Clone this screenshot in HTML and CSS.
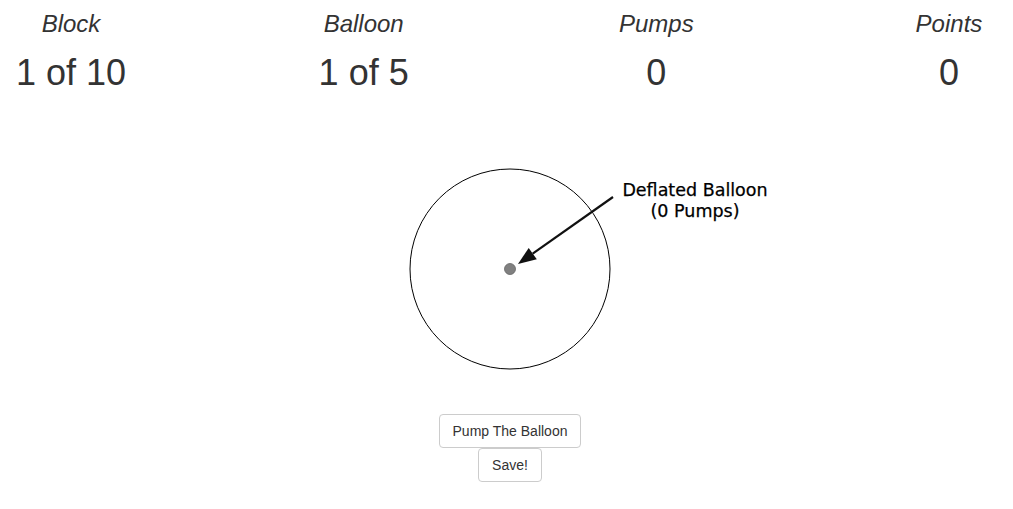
FILE: index.html
```html
<!DOCTYPE html>
<html>
<head>
<meta charset="utf-8">
<link rel="stylesheet" href="styles.css">
</head>
<body>
<div class="stats">
  <div class="stat"><div class="label">Block</div><div class="value">1 of 10</div></div>
  <div class="stat"><div class="label">Balloon</div><div class="value">1 of 5</div></div>
  <div class="stat"><div class="label">Pumps</div><div class="value">0</div></div>
  <div class="stat"><div class="label">Points</div><div class="value">0</div></div>
</div>
<div class="stage">
  <svg class="balloon" width="520" height="230" viewBox="0 0 520 230" xmlns="http://www.w3.org/2000/svg">
    <circle cx="260" cy="109" r="100" fill="none" stroke="#000" stroke-width="1"/>
    <circle cx="260" cy="109" r="5.5" fill="#808080" stroke="#666" stroke-width="0.8"/>
    <line x1="363" y1="37" x2="282.7" y2="93.6" stroke="#111" stroke-width="2.2"/>
    <polygon points="268,104 286.8,99.3 278.7,87.9" fill="#111"/>
    <text x="445" y="35.5" class="note" text-anchor="middle">Deflated Balloon</text>
    <text x="445" y="57" class="note" text-anchor="middle">(0 Pumps)</text>
  </svg>
</div>
<div class="actions">
  <button class="btn">Pump The Balloon</button>
  <button class="btn">Save!</button>
</div>
</body>
</html>
```
FILE: styles.css
```css
html, body {
  margin: 0;
  padding: 0;
  background: #fff;
}
body {
  font-family: "Liberation Sans", Arial, sans-serif;
  color: #333;
  width: 1013px;
}
.stats {
  display: grid;
  grid-template-columns: repeat(4, 128px);
  column-gap: 164.67px;
  padding-left: 7px;
  padding-top: 12px;
}
.stat {
  text-align: center;
  white-space: nowrap;
}
.label {
  font-size: 24px;
  line-height: 24px;
  font-style: italic;
}
.value {
  font-size: 36px;
  line-height: 36px;
  margin-top: 19px;
}
.stage {
  display: flex;
  justify-content: center;
  padding-left: 7px;
  margin-top: 69px;
}
.balloon {
  display: block;
}
.note {
  font-family: "DejaVu Sans", sans-serif;
  font-size: 17.5px;
  fill: #000;
  stroke: #000;
  stroke-width: 0.25px;
}
.actions {
  display: flex;
  flex-direction: column;
  align-items: center;
  gap: 0;
  padding-left: 7px;
  margin-top: 24px;
}
.btn {
  font-family: "Liberation Sans", Arial, sans-serif;
  font-size: 14px;
  line-height: 20px;
  color: #333;
  background: #fff;
  border: 1px solid #ccc;
  border-radius: 4px;
  padding: 6px 13px;
  margin: 0;
}
```
